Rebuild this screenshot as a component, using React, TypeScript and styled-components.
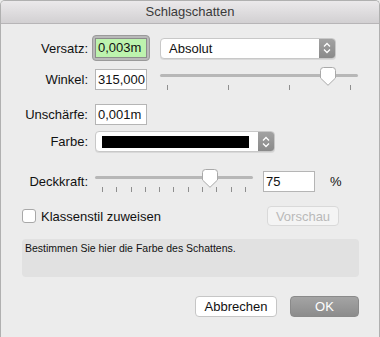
import React from 'react';
import styled, { createGlobalStyle } from 'styled-components';

const GlobalStyle = createGlobalStyle`
  body {
    margin: 0;
    background: #ececec;
    font-family: "Liberation Sans", Arial, sans-serif;
  }
`;

const Thumb = () => (
  <svg width="16" height="19" viewBox="0 0 16 19">
    <path
      d="M3.5 0.5 H12.5 A3 3 0 0 1 15.5 3.5 V11 L8 18.3 L0.5 11 V3.5 A3 3 0 0 1 3.5 0.5 Z"
      fill="#ffffff"
      stroke="#a9a9a9"
      strokeWidth="1"
    />
  </svg>
);

const Stepper = () => (
  <svg width="8" height="12" viewBox="0 0 8 12">
    <path d="M1 4.5 L4 1.5 L7 4.5 M1 7.5 L4 10.5 L7 7.5" fill="none" stroke="#ffffff" strokeWidth="1.3" />
  </svg>
);

const Slider = ({ width, value, ticks }: { width: number; value: number; ticks: number }) => (
  <SliderBox style={{ width }}>
    <Track />
    <ThumbHolder style={{ left: `calc(${value * 100}% - 8px)` }}>
      <Thumb />
    </ThumbHolder>
    <Ticks>
      {Array.from({ length: ticks }).map((_, i) => (
        <Tick key={i} />
      ))}
    </Ticks>
  </SliderBox>
);

const App = () => {
  return (
    <>
      <GlobalStyle />
      <Window>
        <TitleBar>Schlagschatten</TitleBar>
        <Content>
          <Row $top={11}>
            <Label>Versatz:</Label>
            <FocusRing>
              <Field $focused>0,003m</Field>
            </FocusRing>
            <Popup $width={176} $left={10}>
              <PopupText>Absolut</PopupText>
              <StepperBox>
                <Stepper />
              </StepperBox>
            </Popup>
          </Row>
          <Row $top={7}>
            <Label>Winkel:</Label>
            <Field>315,000</Field>
            <SliderSpacer $w={13} />
            <Slider width={198} value={0.85} ticks={4} />
          </Row>
          <Row $top={14}>
            <Label>Unschärfe:</Label>
            <Field>0,001m</Field>
          </Row>
          <Row $top={6}>
            <Label>Farbe:</Label>
            <Popup $width={180} $left={0}>
              <Swatch />
              <StepperBox>
                <Stepper />
              </StepperBox>
            </Popup>
          </Row>
          <Row $top={18}>
            <Label>Deckkraft:</Label>
            <Slider width={158} value={0.73} ticks={11} />
            <SliderSpacer $w={10} />
            <Field>75</Field>
            <Percent>%</Percent>
          </Row>
          <Row $top={14}>
            <CheckLabel>
              <CheckBox />
              Klassenstil zuweisen
            </CheckLabel>
            <PreviewButton disabled>Vorschau</PreviewButton>
          </Row>
          <InfoBox>Bestimmen Sie hier die Farbe des Schattens.</InfoBox>
          <Buttons>
            <Button>Abbrechen</Button>
            <Button $primary>OK</Button>
          </Buttons>
        </Content>
      </Window>
    </>
  );
};

const Window = styled.div`
  width: 380px;
  height: 337px;
  box-sizing: border-box;
  border: 1px solid #b0b0b0;
  border-bottom: none;
  border-radius: 5px 5px 0 0;
  background: #ececec;
  overflow: hidden;
  color: #111111;
`;

const TitleBar = styled.div`
  height: 22px;
  line-height: 22px;
  text-align: center;
  font-size: 13px;
  color: #3a3a3a;
  background: linear-gradient(#ebe9eb, #d2d0d2);
  border-bottom: 1px solid #b7b5b7;
`;

const Content = styled.div`
  padding: 0 20px 0 0;
`;

const Row = styled.div<{ $top: number }>`
  display: flex;
  align-items: center;
  margin-top: ${({ $top }) => $top}px;
`;

const Label = styled.div`
  width: 87px;
  text-align: right;
  font-size: 13px;
  margin-right: 7px;
`;

const FocusRing = styled.div`
  margin-left: -3px;
  padding: 2px;
  border: 1px solid #9a9a9a;
  border-radius: 4px;
  background: #b9b9b9;
`;

const Field = styled.div<{ $focused?: boolean }>`
  box-sizing: border-box;
  width: 52px;
  height: ${({ $focused }) => ($focused ? 20 : 21)}px;
  line-height: ${({ $focused }) => ($focused ? 18 : 19)}px;
  padding: 0 2px;
  font-size: 13px;
  white-space: nowrap;
  overflow: hidden;
  background: ${({ $focused }) => ($focused ? '#bdf3ae' : '#ffffff')};
  border: 1px solid ${({ $focused }) => ($focused ? '#8c8c8c' : '#b5b5b5')};
  color: #111;
`;

const Popup = styled.div<{ $width: number; $left: number }>`
  box-sizing: border-box;
  display: flex;
  align-items: center;
  width: ${({ $width }) => $width}px;
  height: 21px;
  margin-left: ${({ $left }) => $left}px;
  background: #ffffff;
  border: 1px solid #c8c8c8;
  border-radius: 4px;
  box-shadow: 0 1px 0 rgba(0, 0, 0, 0.08);
  overflow: hidden;
`;

const PopupText = styled.div`
  flex: 1;
  padding-left: 8px;
  font-size: 13px;
`;

const StepperBox = styled.div`
  width: 16px;
  height: 100%;
  display: flex;
  align-items: center;
  justify-content: center;
  margin-left: auto;
  background: linear-gradient(#a2a2a2, #8a8a8a);
`;

const Swatch = styled.div`
  width: 147px;
  height: 12px;
  margin-left: 6px;
  background: #000;
`;

const SliderSpacer = styled.div<{ $w: number }>`
  width: ${({ $w }) => $w}px;
  flex: none;
`;

const SliderBox = styled.div`
  position: relative;
  height: 22px;
  flex: none;
`;

const Track = styled.div`
  position: absolute;
  left: 0;
  right: 0;
  top: 6px;
  height: 3px;
  border-radius: 2px;
  background: #b7b7b7;
`;

const ThumbHolder = styled.div`
  position: absolute;
  top: -1px;
  line-height: 0;
`;

const Ticks = styled.div`
  position: absolute;
  left: 7px;
  right: 7px;
  top: 17px;
  display: flex;
  justify-content: space-between;
`;

const Tick = styled.div`
  width: 1px;
  height: 5px;
  background: #8e8e8e;
`;

const Percent = styled.div`
  margin-left: 15px;
  font-size: 13px;
`;

const CheckLabel = styled.label`
  display: flex;
  align-items: center;
  margin-left: 21px;
  font-size: 13px;
  flex: 1;
`;

const CheckBox = styled.span`
  box-sizing: border-box;
  width: 14px;
  height: 14px;
  margin-right: 5px;
  border: 1px solid #a8a8a8;
  border-radius: 3px;
  background: #ffffff;
`;

const PreviewButton = styled.button`
  box-sizing: border-box;
  width: 72px;
  height: 20px;
  margin-right: 20px;
  padding: 0;
  font-family: inherit;
  font-size: 13px;
  color: #b9b9b9;
  background: #f4f4f4;
  border: 1px solid #d9d9d9;
  border-radius: 4px;
`;

const InfoBox = styled.div`
  box-sizing: border-box;
  height: 38px;
  margin: 13px 0 0 21px;
  padding: 3px 3px;
  font-size: 10.5px;
  background: #e1e1e1;
  border-radius: 4px;
  color: #111;
`;

const Buttons = styled.div`
  display: flex;
  justify-content: flex-end;
  gap: 13px;
  margin-top: 19px;
`;

const Button = styled.button<{ $primary?: boolean }>`
  box-sizing: border-box;
  width: ${({ $primary }) => ($primary ? 69 : 82)}px;
  height: 21px;
  padding: 0;
  font-family: inherit;
  font-size: 13px;
  border-radius: 4px;
  color: ${({ $primary }) => ($primary ? '#ffffff' : '#111111')};
  background: ${({ $primary }) => ($primary ? 'linear-gradient(#a4a4a4, #8c8c8c)' : '#ffffff')};
  border: 1px solid ${({ $primary }) => ($primary ? '#8a8a8a' : '#c6c6c6')};
`;

export default App;
